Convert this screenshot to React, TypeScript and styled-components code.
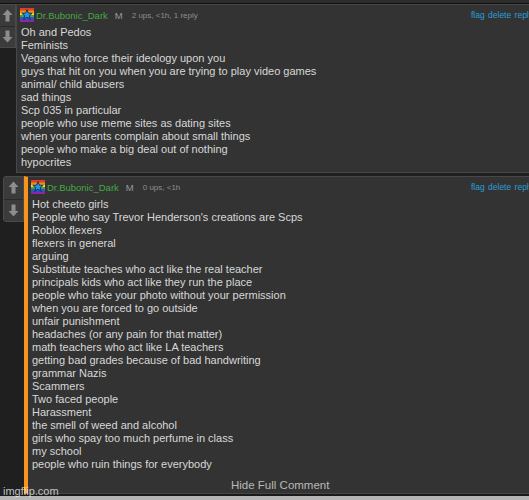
import React from "react";
import styled, { createGlobalStyle } from "styled-components";

const GlobalStyle = createGlobalStyle`
  html, body {
    margin: 0;
    padding: 0;
    background: #1f1f1f;
    overflow: hidden;
  }
  body {
    font-family: "Liberation Sans", Arial, sans-serif;
  }
`;

const Page = styled.div`
  position: relative;
  width: 540px;
  height: 500px;
  background: #1f1f1f;
  display: flex;
  flex-direction: column;
`;

const TopBand = styled.div`
  height: 4px;
  background: #2c2c2c;
  border-bottom: 1px solid #111;
`;

const Row = styled.div<{ $indent?: number; $gap?: number }>`
  display: flex;
  align-items: stretch;
  padding-left: ${(p) => p.$indent || 0}px;
  margin-top: ${(p) => p.$gap || 0}px;
`;

const Votes = styled.div<{ $w: number; $rounded?: boolean }>`
  width: ${(p) => p.$w}px;
  flex-shrink: 0;
  align-self: flex-start;
  display: flex;
  flex-direction: column;
  background: #3b3b3b;
  border: 1px solid #4a4a4a;
  border-left: ${(p) => (p.$rounded ? "1px solid #4a4a4a" : "none")};
  border-radius: ${(p) => (p.$rounded ? "3px 0 0 3px" : "0")};
  box-sizing: border-box;
`;

const VoteBtn = styled.div<{ $h: number }>`
  height: ${(p) => p.$h}px;
  display: flex;
  align-items: center;
  justify-content: center;
  & + & {
    border-top: 1px solid #2a2a2a;
  }
`;

const Box = styled.div<{ $thread?: boolean }>`
  flex: 1;
  background: #333;
  border: 1px solid #474747;
  border-left: ${(p) => (p.$thread ? "4px solid #f7941d" : "1px solid #474747")};
  border-right: none;
  padding: 0 0 ${(p) => (p.$thread ? 1 : 3)}px 3px;
  min-height: ${(p) => (p.$thread ? 315 : 0)}px;
`;

const Header = styled.div`
  height: 21px;
  display: flex;
  align-items: center;
  font-size: 9.5px;
  padding-right: 7px;
  white-space: nowrap;
`;

const User = styled.span`
  color: #45a845;
  margin-left: 2px;
`;

const Role = styled.span`
  color: #9a9a9a;
  margin-left: 7px;
`;

const Meta = styled.span`
  color: #8e8e8e;
  font-size: 8px;
  margin-left: 9px;
`;

const Links = styled.span`
  margin-left: auto;
  color: #2a9fd8;
  font-size: 8.5px;
  word-spacing: 1px;
`;

const Body = styled.div`
  color: #d8d8d8;
  font-size: 11px;
  line-height: 13px;
  padding-left: 1px;
`;

const Line = styled.div`
  white-space: nowrap;
`;

const HideLink = styled.div`
  color: #b9b9b9;
  font-size: 11.5px;
  line-height: 13px;
  margin-top: 8px;
  padding-left: 200px;
`;

const BottomBand = styled.div`
  height: 6px;
  border-top: 2px solid #1a1a1a;
  background: #b5b5b5;
  margin-top: auto;
`;

const Watermark = styled.div`
  position: absolute;
  left: 3px;
  bottom: 3px;
  font-size: 11px;
  color: rgba(255, 255, 255, 0.72);
`;

const Arrow = ({ down }: { down?: boolean }) => (
  <svg width="11" height="13" viewBox="0 0 11 13" style={down ? { transform: "rotate(180deg)" } : undefined}>
    <path d="M5.5 0.5 L10.5 6 H7.5 V12.5 H3.5 V6 H0.5 Z" fill="#8d8d8d" />
  </svg>
);

const Avatar = () => (
  <svg width="14" height="14" viewBox="0 0 14 14">
    <rect x="0" y="0" width="14" height="2.4" fill="#e53935" />
    <rect x="0" y="2.3" width="14" height="2.4" fill="#fb8c00" />
    <rect x="0" y="4.6" width="14" height="2.4" fill="#fdd835" />
    <rect x="0" y="7" width="14" height="2.4" fill="#43a047" />
    <rect x="0" y="9.3" width="14" height="2.4" fill="#1e63d6" />
    <rect x="0" y="11.6" width="14" height="2.4" fill="#8e24aa" />
    <path
      d="M7 1.6 L8.4 5.2 L12.2 5.3 L9.2 7.7 L10.3 11.4 L7 9.2 L3.7 11.4 L4.8 7.7 L1.8 5.3 L5.6 5.2 Z"
      fill="#2196f3"
      stroke="#0b2a55"
      strokeWidth="0.9"
      strokeLinejoin="round"
    />
  </svg>
);

const first = [
  "Oh and Pedos",
  "Feminists",
  "Vegans who force their ideology upon you",
  "guys that hit on you when you are trying to play video games",
  "animal/ child abusers",
  "sad things",
  "Scp 035 in particular",
  "people who use meme sites as dating sites",
  "when your parents complain about small things",
  "people who make a big deal out of nothing",
  "hypocrites",
];

const second = [
  "Hot cheeto girls",
  "People who say Trevor Henderson's creations are Scps",
  "Roblox flexers",
  "flexers in general",
  "arguing",
  "Substitute teaches who act like the real teacher",
  "principals kids who act like they run the place",
  "people who take your photo without your permission",
  "when you are forced to go outside",
  "unfair punishment",
  "headaches (or any pain for that matter)",
  "math teachers who act like LA teachers",
  "getting bad grades because of bad handwriting",
  "grammar Nazis",
  "Scammers",
  "Two faced people",
  "Harassment",
  "the smell of weed and alcohol",
  "girls who spay too much perfume in class",
  "my school",
  "people who ruin things for everybody",
];

const CommentHeader = ({ meta }: { meta: string }) => (
  <Header>
    <Avatar />
    <User>Dr.Bubonic_Dark</User>
    <Role>M</Role>
    <Meta>{meta}</Meta>
    <Links>flag delete reply</Links>
  </Header>
);

export default function App() {
  return (
    <Page>
      <GlobalStyle />
      <TopBand />
      <Row>
        <Votes $w={16}>
          <VoteBtn $h={21}>
            <Arrow />
          </VoteBtn>
          <VoteBtn $h={20}>
            <Arrow down />
          </VoteBtn>
        </Votes>
        <Box>
          <CommentHeader meta="2 ups, <1h, 1 reply" />
          <Body>
            {first.map((t) => (
              <Line key={t}>{t}</Line>
            ))}
          </Body>
        </Box>
      </Row>
      <Row $indent={3} $gap={3}>
        <Votes $w={21} $rounded>
          <VoteBtn $h={22}>
            <Arrow />
          </VoteBtn>
          <VoteBtn $h={21}>
            <Arrow down />
          </VoteBtn>
        </Votes>
        <Box $thread>
          <CommentHeader meta="0 ups, <1h" />
          <Body>
            {second.map((t) => (
              <Line key={t}>{t}</Line>
            ))}
          </Body>
          <HideLink>Hide Full Comment</HideLink>
        </Box>
      </Row>
      <BottomBand />
      <Watermark>imgflip.com</Watermark>
    </Page>
  );
}
